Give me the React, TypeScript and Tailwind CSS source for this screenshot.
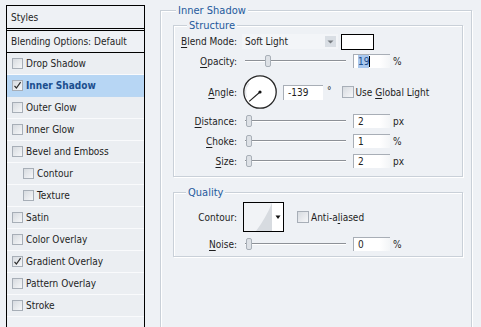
import React from 'react'

const styleRows = [
  { name: 'Drop Shadow' },
  { name: 'Inner Shadow', checked: true, active: true },
  { name: 'Outer Glow' },
  { name: 'Inner Glow' },
  { name: 'Bevel and Emboss' },
  { name: 'Contour', sub: true },
  { name: 'Texture', sub: true },
  { name: 'Satin' },
  { name: 'Color Overlay' },
  { name: 'Gradient Overlay', checked: true },
  { name: 'Pattern Overlay' },
  { name: 'Stroke' },
]

function Check({ checked, size = 11 }: { checked?: boolean; size?: number }) {
  return (
    <span
      className={`flex shrink-0 items-center justify-center border border-[#a7aeb7] bg-gradient-to-br from-[#d7dbe0] to-[#f6f7f9] ${size === 12 ? 'h-[12px] w-[12px]' : 'h-[11px] w-[11px]'}`}
    >
      {checked && (
        <svg width="9" height="9" viewBox="0 0 9 9">
          <path d="M1.5 4.8 L3.4 7 L7.6 1.2" stroke="#2d2d2d" strokeWidth="1.2" fill="none" />
        </svg>
      )}
    </span>
  )
}

// mnemonic underline
function Mn({ pre = '', k, post = '' }: { pre?: string; k: string; post?: string }) {
  return (
    <span>
      {pre}
      <span className="underline underline-offset-[2px]">{k}</span>
      {post}
    </span>
  )
}

function Slider({ pos }: { pos: number }) {
  return (
    <div className="relative ml-[3px] h-[14px] w-[101px] shrink-0">
      <div className="absolute left-0 right-0 top-[6px] h-[2px] border-t border-b border-t-[#8d9197] border-b-white" />
      <div
        className="absolute top-[1px] h-[12px] w-[6px] rounded-[2px] border border-[#a9b0b8] bg-[#dde1e6]"
        style={{ left: pos }}
      />
    </div>
  )
}

function Field({ value, selected }: { value: string; selected?: boolean }) {
  return (
    <div className="ml-[7px] flex h-[14px] w-[37px] shrink-0 items-center border-t border-l border-[#a8aeb6] bg-gradient-to-r from-white from-70% to-[#f3f5f7] pl-[4px]">
      {selected ? (
        <>
          <span className="bg-[#a9c8ee] text-[#1f4f8f]">{value}</span>
          <span className="h-[11px] w-px bg-black" />
        </>
      ) : (
        <span>{value}</span>
      )}
    </div>
  )
}

function SliderRow({ label, pos, value, unit, selected, className }: {
  label: React.ReactNode
  pos: number
  value: string
  unit: string
  selected?: boolean
  className?: string
}) {
  return (
    <div className={`flex h-[14px] items-center ${className ?? ''}`}>
      <div className="w-[63px] shrink-0 text-right">{label}</div>
      <div className="w-[5px]" />
      <Slider pos={pos} />
      <Field value={value} selected={selected} />
      <span className="ml-[3px]">{unit}</span>
    </div>
  )
}

const groupBox = 'border border-[#c9d0d8] shadow-[1px_1px_0_#fff,inset_1px_1px_0_#fff]'
const legendCls = 'bg-[#eef1f5] px-[2px] text-[11px] text-[#1f5a9c]'

export default function App() {
  return (
    <div className="flex h-[327px] w-[481px] overflow-hidden bg-[#eef1f5] font-['DejaVu_Sans_Condensed','DejaVu_Sans',sans-serif] text-[10px] leading-[13px] text-[#1e1e1e]">
      {/* Styles list */}
      <div className="ml-[6px] mt-[5px] flex h-[340px] w-[139px] shrink-0 flex-col border-x border-black">
        <div className="flex h-[24px] items-center border-y border-black pl-[4px]">Styles</div>
        <div className="h-px" />
        <div className="flex h-[23px] items-center border-y border-black pl-[4px]">Blending Options: Default</div>
        <div className="flex flex-col">
          {styleRows.map((r) => (
            <div
              key={r.name}
              className={`flex h-[22px] items-center border-b ${r.sub ? 'pl-[16px]' : 'pl-[5px]'} ${
                r.active ? 'border-[#b9d6f2] bg-[#b7d6f4] font-bold text-[#1b4e8e]' : 'border-[#f9fafc] bg-[#ebeef2]'
              }`}
            >
              <Check checked={r.checked} />
              <span className="ml-[3px]">{r.name}</span>
            </div>
          ))}
        </div>
      </div>

      {/* Inner Shadow */}
      <fieldset className={`ml-[15px] mt-[4px] h-[345px] w-[312px] shrink-0 ${groupBox}`}>
        <legend className={`ml-[15px] ${legendCls}`}>Inner Shadow</legend>
        <div className="pl-[12px]">
          <fieldset className={`mt-[2px] w-[290px] pb-[8px] ${groupBox}`}>
            <legend className={`ml-[13px] ${legendCls}`}>Structure</legend>
            <div className="pt-[1px]">
              <div className="flex h-[17px] items-center">
                <div className="w-[63px] shrink-0 text-right">
                  <Mn k="B" post="lend Mode:" />
                </div>
                <div className="ml-[5px] flex h-[15px] w-[96px] shrink-0 items-center bg-[#f3f5f8] pl-[3px]">
                  <span>Soft Light</span>
                  <span className="ml-auto mr-[2px] flex h-[11px] w-[11px] items-center justify-center bg-[#d9dee4]">
                    <svg width="7" height="4" viewBox="0 0 7 4">
                      <path d="M0.5 0.5 H6.5 L3.5 3.5 Z" fill="#777b80" />
                    </svg>
                  </span>
                </div>
                <div className="ml-[3px] h-[16px] w-[33px] shrink-0 border border-black bg-white" />
              </div>

              <SliderRow className="mt-[4px]" label={<Mn k="O" post="pacity:" />} pos={20} value="19" unit="%" selected />

              <div className="mt-[6px] flex h-[36px] items-center">
                <div className="w-[63px] shrink-0 text-right">
                  <Mn k="A" post="ngle:" />
                </div>
                <div className="ml-[6px] shrink-0">
                  <svg width="34" height="34" viewBox="0 0 34 34">
                    <circle cx="17" cy="17" r="16.2" fill="#ffffff" stroke="#262626" strokeWidth="1.3" />
                    <path d="M3.6 22 A14 14 0 0 1 6 8" stroke="#e3e6ea" strokeWidth="1.2" fill="none" />
                    <line x1="17" y1="17" x2="6.2" y2="26.4" stroke="#1e1e1e" strokeWidth="1.1" />
                    <circle cx="17" cy="17" r="1.6" fill="#111" />
                  </svg>
                </div>
                <div className="ml-[6px] flex h-[15px] w-[40px] shrink-0 items-center border-t border-l border-[#a8aeb6] bg-white pl-[4px]">
                  -139
                </div>
                <span className="ml-[4px] -mt-[4px]">°</span>
                <div className="ml-[10px] flex items-center">
                  <Check size={12} />
                  <span className="ml-[2px]">
                    <Mn pre="Use " k="G" post="lobal Light" />
                  </span>
                </div>
              </div>

              <SliderRow className="mt-[4px]" label={<Mn k="D" post="istance:" />} pos={1} value="2" unit="px" />
              <SliderRow className="mt-[6px]" label={<Mn k="C" post="hoke:" />} pos={1} value="1" unit="%" />
              <SliderRow className="mt-[6px]" label={<Mn k="S" post="ize:" />} pos={1} value="2" unit="px" />
            </div>
          </fieldset>

          <fieldset className={`mt-[9px] w-[290px] pb-[5px] ${groupBox}`}>
            <legend className={`ml-[12px] ${legendCls}`}>Quality</legend>
            <div className="pt-[3px]">
              <div className="flex h-[30px] items-center">
                <div className="w-[63px] shrink-0 text-right">Contour:</div>
                <div className="ml-[6px] flex h-[30px] w-[41px] shrink-0 border border-black bg-white">
                  <svg width="39" height="28" viewBox="0 0 39 28">
                    <rect x="0" y="0" width="28" height="28" fill="#f1f3f6" />
                    <path d="M12 28 C18 20 24 10 28 0 L28 28 Z" fill="#d7dbe0" />
                    <path d="M31.5 12.5 H36.5 L34 16 Z" fill="#111" />
                  </svg>
                </div>
                <div className="ml-[13px] flex items-center">
                  <Check size={12} />
                  <span className="ml-[2px]">
                    <Mn pre="Anti-a" k="l" post="iased" />
                  </span>
                </div>
              </div>
              <SliderRow className="mt-[5px]" label={<Mn k="N" post="oise:" />} pos={1} value="0" unit="%" />
            </div>
          </fieldset>
        </div>
      </fieldset>
    </div>
  )
}
